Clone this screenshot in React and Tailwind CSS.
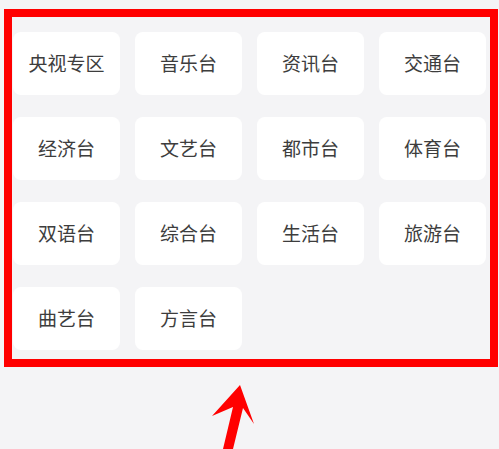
const channels = [
  "央视专区", "音乐台", "资讯台", "交通台",
  "经济台", "文艺台", "都市台", "体育台",
  "双语台", "综合台", "生活台", "旅游台",
  "曲艺台", "方言台",
];

export default function App() {
  return (
    <div
      className="relative h-[449px] w-[499px] overflow-hidden bg-[#f4f4f6]"
      style={{ fontFamily: '"Noto Sans CJK SC", "Noto Sans", sans-serif' }}
    >
      <div className="grid grid-cols-[repeat(4,107px)] auto-rows-[63px] gap-x-[15px] gap-y-[22px] pl-[13px] pt-[32px]">
        {channels.map((name) => (
          <div
            key={name}
            className="flex items-center justify-center rounded-lg bg-white text-[19px] text-[#3d3d3d]"
          >
            {name}
          </div>
        ))}
      </div>

      {/* red annotation frame */}
      <div className="absolute left-[4px] top-[9px] h-[358px] w-[494px] border-[8px] border-[#ff0000]" />

      {/* red arrow */}
      <svg className="absolute left-0 top-0" width="499" height="449" viewBox="0 0 499 449">
        <polygon
          points="240,385 254,424 243,408 233,449 223,449 233,407 212,416"
          fill="#ff0000"
        />
      </svg>
    </div>
  );
}
